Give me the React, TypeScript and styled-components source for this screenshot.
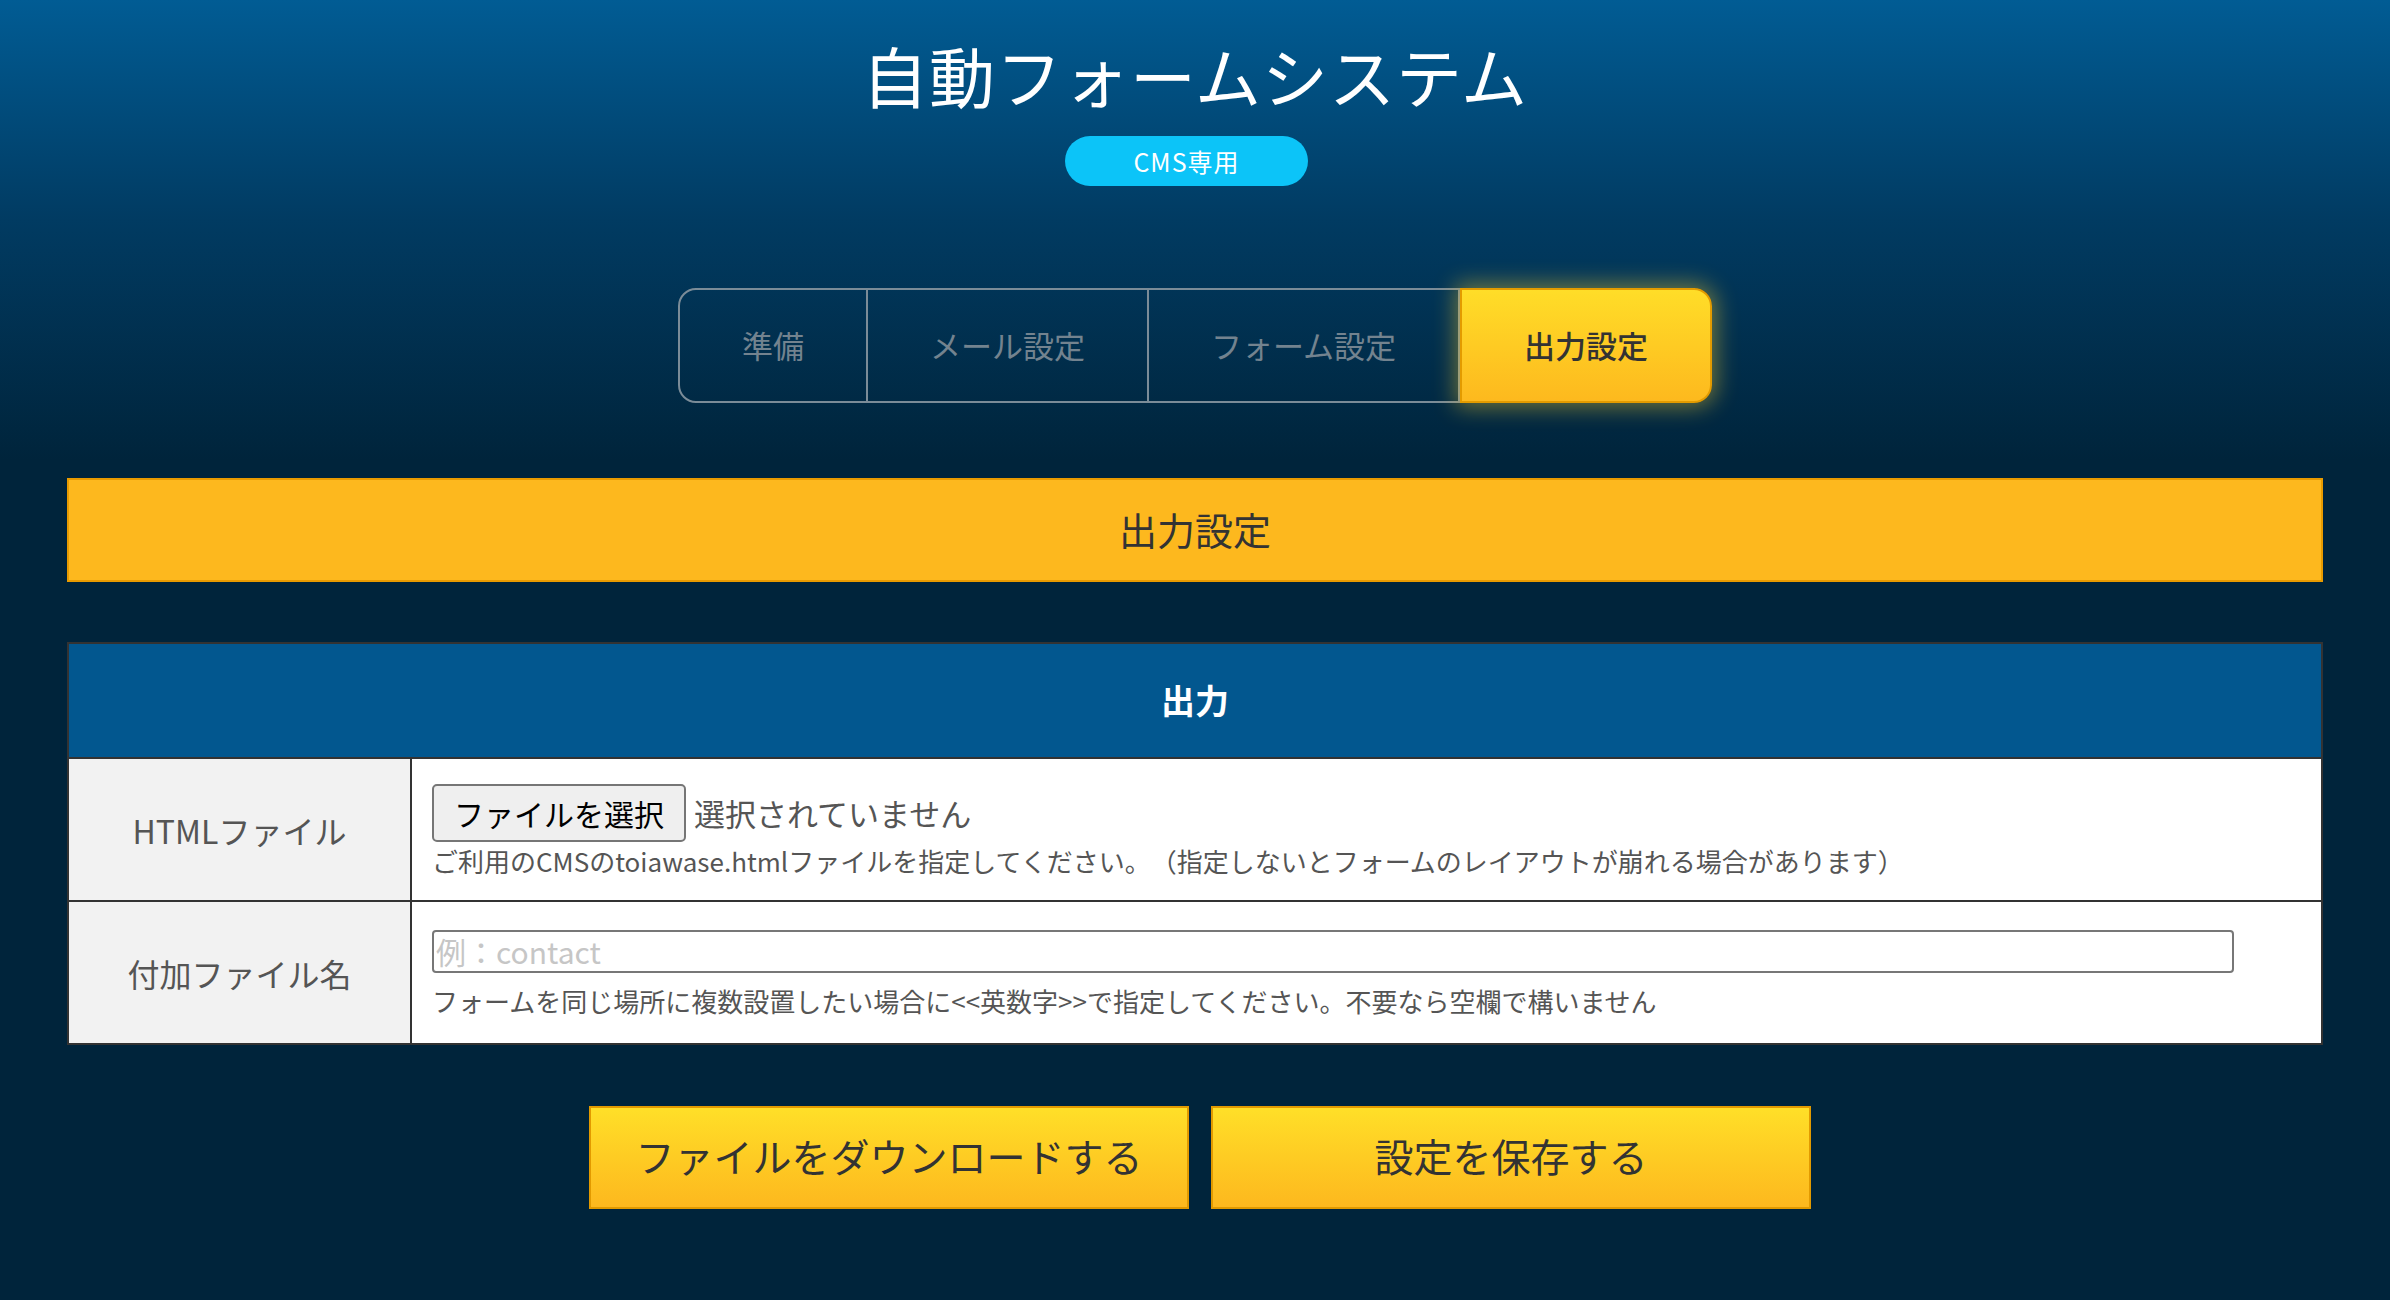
import styled, { createGlobalStyle } from "styled-components";

const GlobalStyle = createGlobalStyle`
  html, body {
    margin: 0;
    padding: 0;
  }
  body {
    min-height: 100vh;
    background-color: #00233a;
    background-image: linear-gradient(180deg, #015c94 0px, #013b62 220px, #00243b 460px);
    background-repeat: no-repeat;
    font-family: "Noto Sans CJK JP", "Noto Sans", sans-serif;
  }
`;

const Page = styled.div`
  padding: 35px 0 80px;
  display: flex;
  flex-direction: column;
  align-items: center;
`;

const Title = styled.h1`
  margin: 0;
  font-size: 66px;
  line-height: 79px;
  font-weight: 400;
  color: #fff;
  letter-spacing: 1px;
`;

const Badge = styled.span`
  margin: 22px 17px 0 0;
  width: 243px;
  height: 50px;
  border-radius: 25px;
  background: #0cc4f8;
  color: #fff;
  font-size: 25px;
  line-height: 50px;
  text-align: center;
  letter-spacing: 1px;
`;

const TabBar = styled.nav`
  margin-top: 102px;
  display: flex;
`;

const Tab = styled.div<{ $active?: boolean; $first?: boolean; $last?: boolean }>`
  box-sizing: border-box;
  height: 115px;
  padding: 0 62px 3px;
  display: flex;
  align-items: center;
  font-size: 31px;
  font-weight: ${(p) => (p.$active ? 500 : 400)};
  color: ${(p) => (p.$active ? "#333" : "#73838f")};
  border: 2px solid ${(p) => (p.$active ? "#e39b00" : "#7b8c98")};
  border-left-width: ${(p) => (p.$first || p.$active ? "2px" : "0")};
  border-radius: ${(p) =>
    p.$first ? "18px 0 0 18px" : p.$last ? "0 18px 18px 0" : "0"};
  background: ${(p) =>
    p.$active ? "linear-gradient(180deg, #ffdd28 0%, #fdb91e 100%)" : "transparent"};
  box-shadow: ${(p) => (p.$active ? "0 0 22px 4px rgba(255, 208, 40, 0.45)" : "none")};
`;

const SectionBar = styled.div`
  box-sizing: border-box;
  margin-top: 75px;
  width: 2256px;
  height: 104px;
  background: #fdb81e;
  border: 2px solid #e89b00;
  color: #333;
  font-size: 38px;
  line-height: 98px;
  text-align: center;
`;

const Table = styled.table`
  margin-top: 60px;
  width: 2256px;
  border-collapse: collapse;
  border: 2px solid #333;
`;

const HeadCell = styled.th`
  height: 110px;
  background: #02578f;
  color: #fff;
  font-size: 34px;
  font-weight: 700;
  border: 2px solid #333;
  padding: 0 0 3px;
`;

const Row = styled.tr`
  height: 143px;
`;

const Label = styled.th`
  box-sizing: border-box;
  width: 343px;
  background: #f2f2f2;
  color: #555;
  font-size: 32px;
  font-weight: 400;
  border: 2px solid #333;
  padding: 0;
`;

const Value = styled.td`
  background: #fff;
  border: 2px solid #333;
  padding: 0 20px;
  vertical-align: middle;
`;

const FileLine = styled.div`
  display: flex;
  align-items: center;
`;

const FileButton = styled.button`
  box-sizing: border-box;
  height: 58px;
  padding: 0 20px;
  background: #efefef;
  border: 2px solid #767676;
  border-radius: 5px;
  color: #000;
  font-family: inherit;
  font-size: 30px;
`;

const FileStatus = styled.span`
  margin-left: 8px;
  font-size: 31px;
  color: #555;
`;

const Hint = styled.p<{ $gap: number }>`
  margin: ${(p) => p.$gap}px 0 0;
  font-size: 26px;
  line-height: 31px;
  color: #555;
`;

const TextInput = styled.input`
  box-sizing: border-box;
  display: block;
  width: 1802px;
  height: 43px;
  padding: 0 2px;
  border: 2px solid #777;
  border-radius: 4px;
  font-family: inherit;
  font-size: 30px;
  color: #333;
  &::placeholder {
    color: #c6c6c6;
  }
`;

const Actions = styled.div`
  margin-top: 61px;
  margin-left: 10px;
  display: flex;
  gap: 22px;
`;

const ActionButton = styled.button`
  box-sizing: border-box;
  width: 600px;
  height: 103px;
  padding: 0 0 6px;
  background: linear-gradient(180deg, #ffdf28 0%, #fdb81e 100%);
  border: 2px solid #e29a00;
  color: #333;
  font-family: inherit;
  font-size: 39px;
  cursor: pointer;
`;

const tabs = ["準備", "メール設定", "フォーム設定", "出力設定"];

const App = () => {
  return (
    <>
      <GlobalStyle />
      <Page>
        <Title>自動フォームシステム</Title>
        <Badge>CMS専用</Badge>
        <TabBar>
          {tabs.map((t, i) => (
            <Tab key={t} $first={i === 0} $last={i === tabs.length - 1} $active={i === 3}>
              {t}
            </Tab>
          ))}
        </TabBar>
        <SectionBar>出力設定</SectionBar>
        <Table>
          <thead>
            <tr>
              <HeadCell colSpan={2}>出力</HeadCell>
            </tr>
          </thead>
          <tbody>
            <Row>
              <Label>HTMLファイル</Label>
              <Value>
                <FileLine>
                  <FileButton type="button">ファイルを選択</FileButton>
                  <FileStatus>選択されていません</FileStatus>
                </FileLine>
                <Hint $gap={3}>
                  ご利用のCMSのtoiawase.htmlファイルを指定してください。　（指定しないとフォームのレイアウトが崩れる場合があります）
                </Hint>
              </Value>
            </Row>
            <Row>
              <Label>付加ファイル名</Label>
              <Value>
                <TextInput type="text" placeholder="例：contact" />
                <Hint $gap={12}>
                  フォームを同じ場所に複数設置したい場合に&lt;&lt;英数字&gt;&gt;で指定してください。不要なら空欄で構いません
                </Hint>
              </Value>
            </Row>
          </tbody>
        </Table>
        <Actions>
          <ActionButton type="button">ファイルをダウンロードする</ActionButton>
          <ActionButton type="button">設定を保存する</ActionButton>
        </Actions>
      </Page>
    </>
  );
};

export default App;
